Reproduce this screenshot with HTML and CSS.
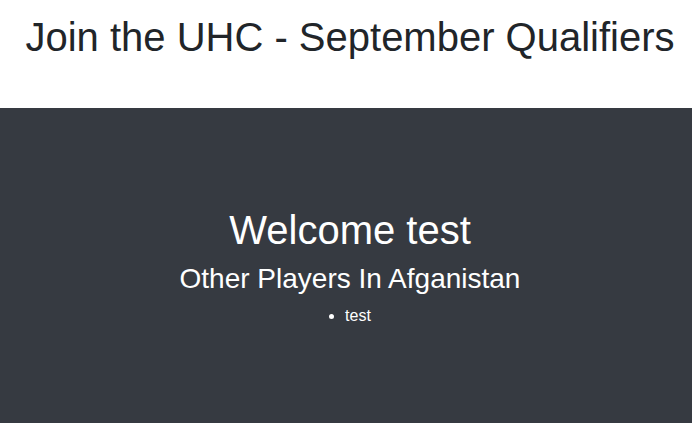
FILE: index.html
```html
<!DOCTYPE html>
<html>
<head>
<meta charset="utf-8">
<link rel="stylesheet" href="styles.css">
</head>
<body>
<header class="top">
  <h1 class="title">Join the UHC - September Qualifiers</h1>
</header>
<main class="hero">
  <h1 class="welcome">Welcome test</h1>
  <h3 class="players">Other Players In Afganistan</h3>
  <ul class="list">
    <li>test</li>
  </ul>
</main>
</body>
</html>
```
FILE: styles.css
```css
html, body {
  margin: 0;
  padding: 0;
}
body {
  font-family: "Liberation Sans", Arial, sans-serif;
  color: #212529;
  background: #fff;
}
.top {
  height: 108px;
  display: flex;
  justify-content: center;
  padding-left: 8px;
  box-sizing: border-box;
}
.title {
  margin: 13px 0 0;
  font-weight: 400;
  font-size: 40px;
  line-height: 48px;
}
.hero {
  background: #363a41;
  color: #fff;
  height: 315px;
  box-sizing: border-box;
  padding: 98px 0 0 8px;
  display: flex;
  flex-direction: column;
  align-items: center;
  text-align: center;
}
.welcome {
  margin: 0 0 8px;
  font-size: 40px;
  font-weight: 400;
  line-height: 48px;
}
.players {
  margin: 0 0 8px;
  font-size: 28px;
  font-weight: 400;
  line-height: 33.6px;
}
.list {
  margin: 0;
  padding-left: 16px;
  font-size: 16px;
  line-height: 24px;
}
```
